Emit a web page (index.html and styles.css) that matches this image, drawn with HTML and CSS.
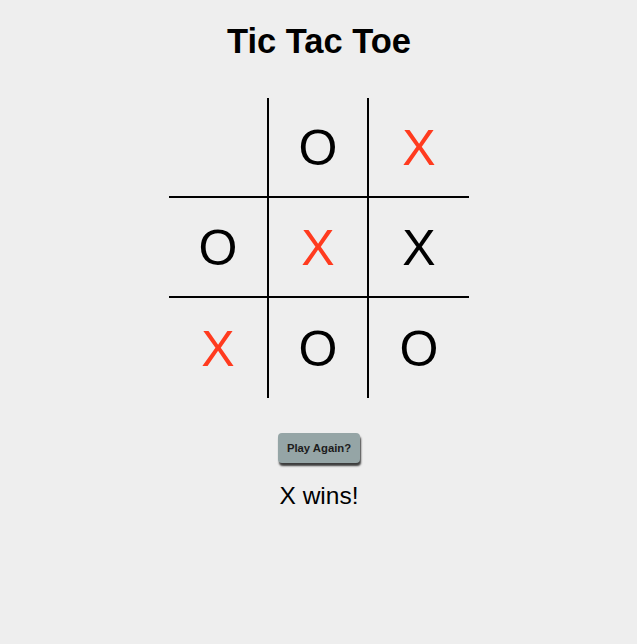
FILE: index.html
```html
<!DOCTYPE html>
<html>
<head>
<meta charset="utf-8">
<title>Tic Tac Toe</title>
<link rel="stylesheet" href="styles.css">
</head>
<body>
<main class="game">
  <h1 class="title">Tic Tac Toe</h1>
  <div class="board">
    <div class="cell"></div>
    <div class="cell">O</div>
    <div class="cell red">X</div>
    <div class="cell">O</div>
    <div class="cell red">X</div>
    <div class="cell">X</div>
    <div class="cell red">X</div>
    <div class="cell">O</div>
    <div class="cell">O</div>
  </div>
  <button class="again">Play Again?</button>
  <p class="status">X wins!</p>
</main>
</body>
</html>
```
FILE: styles.css
```css
html, body {
  margin: 0;
  padding: 0;
  background: #eeeeee;
}
body {
  font-family: "Liberation Sans", Arial, sans-serif;
  color: #000;
}
.game {
  display: flex;
  flex-direction: column;
  align-items: center;
  padding-left: 1px;
}
.title {
  font-size: 34.5px;
  font-weight: bold;
  line-height: 40px;
  margin: 21px 0 0 0;
}
.board {
  margin-top: 37px;
  display: grid;
  grid-template-columns: repeat(3, 100px);
  grid-template-rows: repeat(3, 100px);
}
.cell {
  box-sizing: border-box;
  display: flex;
  align-items: center;
  justify-content: center;
  font-size: 50px;
  line-height: 1;
  padding-top: 2px;
}
.cell:nth-child(3n+1), .cell:nth-child(3n+2) {
  border-right: 2px solid #000;
}
.cell:nth-child(-n+6) {
  border-bottom: 2px solid #000;
}
.red {
  color: #ff3b1f;
}
.again {
  margin-top: 35px;
  width: 82px;
  height: 30px;
  padding: 0;
  border: none;
  border-radius: 4px;
  background: #95a5a6;
  color: #1c1c1c;
  font-family: "Liberation Sans", Arial, sans-serif;
  font-weight: bold;
  font-size: 11.3px;
  box-shadow: 1px 3px 2px rgba(0,0,0,0.75);
}
.status {
  margin: 19px 0 0 0;
  font-size: 24.5px;
  line-height: 28px;
}
```
